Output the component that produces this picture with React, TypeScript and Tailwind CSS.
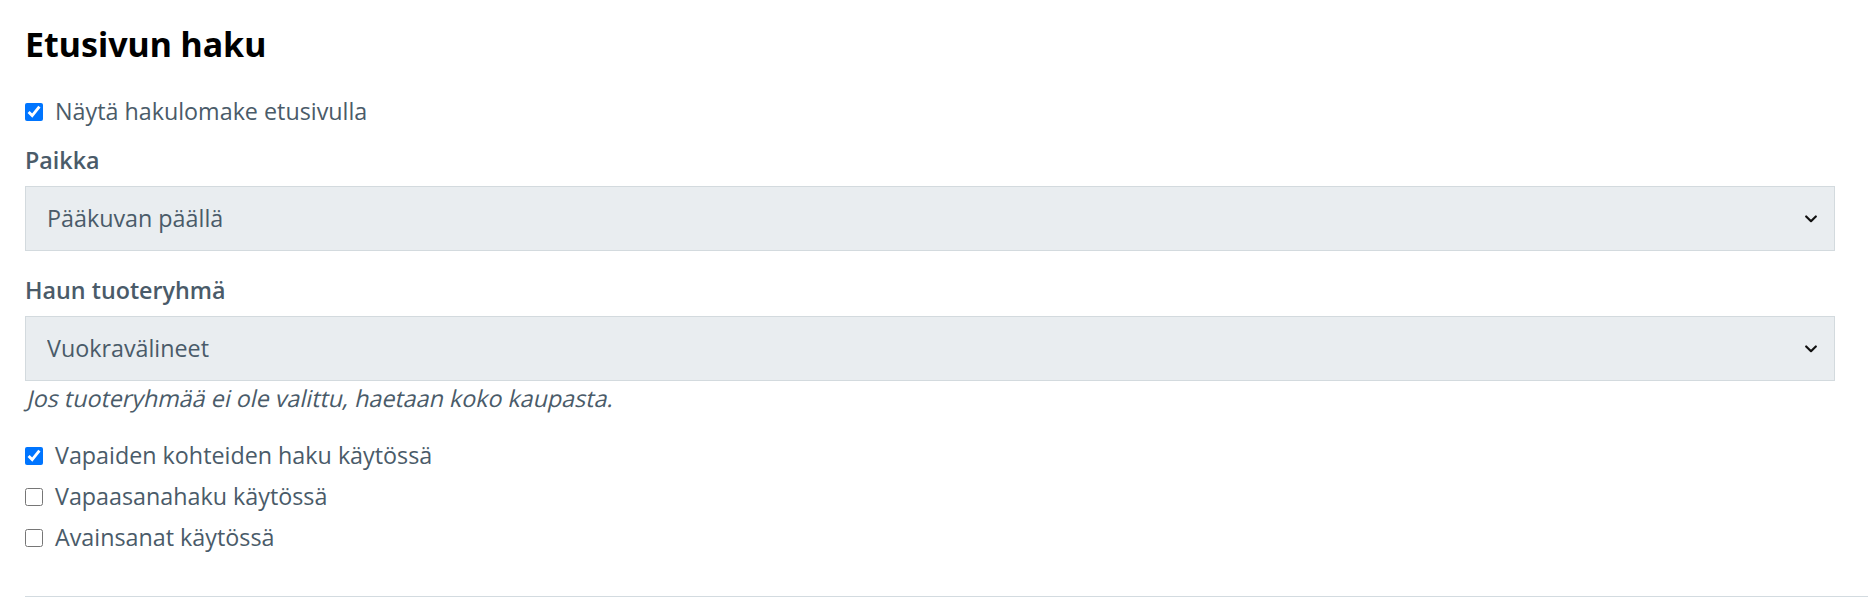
import { ChangeEvent, useState } from "react";

const Chevron = () => (
    <svg
        className="pointer-events-none absolute right-[18px] top-1/2 -translate-y-1/2"
        width="12"
        height="8"
        viewBox="0 0 12 8"
        fill="none"
    >
        <path d="M1.2 1.5 6 6.2 10.8 1.5" stroke="#111" strokeWidth="2.2" strokeLinecap="round" strokeLinejoin="round" />
    </svg>
);

function Valinta({ label, value, options, onChange }: {
    label: string;
    value: string;
    options: string[];
    onChange: (e: ChangeEvent<HTMLSelectElement>) => void;
}) {
    return (
        <div>
            <label className="block font-semibold leading-[41px]">{label}</label>
            <div className="relative mt-[5px]">
                <select
                    value={value}
                    onChange={onChange}
                    className="block h-[65px] w-full appearance-none border border-[#d3dade] bg-[#e9edf0] pl-[21px] pr-12 text-[23.3px] text-[#4a5b69] outline-none"
                >
                    {options.map((o) => (
                        <option key={o}>{o}</option>
                    ))}
                </select>
                <Chevron />
            </div>
        </div>
    );
}

function Valintaruutu({ label, checked, onChange }: { label: string; checked: boolean; onChange: () => void }) {
    return (
        <label className="flex items-center gap-[12px] leading-[41px]">
            <input type="checkbox" checked={checked} onChange={onChange} className="m-0 h-[18px] w-[18px] shrink-0" />
            <span>{label}</span>
        </label>
    );
}

export default function App() {
    const [nayta, setNayta] = useState(true);
    const [paikka, setPaikka] = useState("Pääkuvan päällä");
    const [ryhma, setRyhma] = useState("Vuokravälineet");
    const [vapaat, setVapaat] = useState(true);
    const [vapaasana, setVapaasana] = useState(false);
    const [avainsanat, setAvainsanat] = useState(false);

    return (
        <div className="min-h-screen bg-white pl-[25px] pt-[24px] text-[23.3px] text-[#4a5b69]" style={{ fontFamily: '"Open Sans", "Noto Sans", sans-serif' }}>
            <div className="w-[1810px]">
                <h2 className="text-[34px] font-bold leading-[40px] text-black" style={{ fontFamily: '"Noto Sans", sans-serif' }}>Etusivun haku</h2>

                <div className="mt-[27px]">
                    <Valintaruutu label="Näytä hakulomake etusivulla" checked={nayta} onChange={() => setNayta(!nayta)} />
                </div>

                <div className="mt-[8px]">
                    <Valinta
                        label="Paikka"
                        value={paikka}
                        options={["Pääkuvan päällä", "Pääkuvan alla"]}
                        onChange={(e) => setPaikka(e.target.value)}
                    />
                </div>

                <div className="mt-[19px]">
                    <Valinta
                        label="Haun tuoteryhmä"
                        value={ryhma}
                        options={["Vuokravälineet", "Kaikki"]}
                        onChange={(e) => setRyhma(e.target.value)}
                    />
                </div>
                <p className="mt-[3px] leading-[28px]">
                    <span className="inline-block origin-bottom-left skew-x-[-13deg]">Jos tuoteryhmää ei ole valittu, haetaan koko kaupasta.</span>
                </p>

                <div className="mt-[23px] flex flex-col">
                    <Valintaruutu label="Vapaiden kohteiden haku käytössä" checked={vapaat} onChange={() => setVapaat(!vapaat)} />
                    <Valintaruutu label="Vapaasanahaku käytössä" checked={vapaasana} onChange={() => setVapaasana(!vapaasana)} />
                    <Valintaruutu label="Avainsanat käytössä" checked={avainsanat} onChange={() => setAvainsanat(!avainsanat)} />
                </div>
            </div>
            <div className="mt-[38px] h-px bg-[#d3dbe0]" />
        </div>
    );
}
